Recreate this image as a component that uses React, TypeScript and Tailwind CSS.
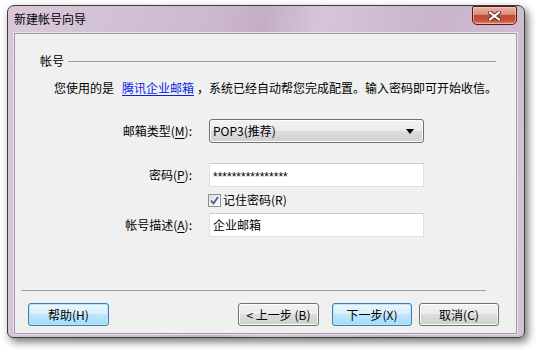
import React from "react";

const font = "font-['Noto_Sans_CJK_SC','Noto_Sans',sans-serif]";

function CloseButton() {
  return (
    <div className="w-[45px] h-[19px] rounded-b-[5px] rounded-t-[2px] border border-[#5a1a10] bg-[linear-gradient(#eab3a6_0%,#d98a78_45%,#c44a35_50%,#c8523a_80%,#e08a70_100%)] shadow-[inset_0_0_0_1px_rgba(255,220,210,0.55)] flex items-center justify-center">
      <svg width="13" height="10" viewBox="0 0 13 10">
        <path d="M2 1.5 L11 8.5 M11 1.5 L2 8.5" stroke="#5b2218" strokeWidth="4" strokeLinecap="square" />
        <path d="M2 1.5 L11 8.5 M11 1.5 L2 8.5" stroke="#ffffff" strokeWidth="2.2" strokeLinecap="square" />
      </svg>
    </div>
  );
}

function WinButton({ label, width, active }: { label: string; width: string; active?: boolean }) {
  const look = active
    ? "border-[#3c7fb1] bg-[linear-gradient(#eaf6fd_0%,#d9f0fc_50%,#bee6fd_50%,#a7d9f5_100%)] shadow-[inset_0_0_0_1px_#b9e4fb]"
    : "border-[#707070] bg-[linear-gradient(#f2f2f2_0%,#ebebeb_50%,#dddddd_50%,#cfcfcf_100%)] shadow-[inset_0_0_0_1px_#fcfcfc]";
  return (
    <div className={`${width} h-[23px] rounded-[3px] border flex items-center justify-center text-[12px] leading-[16px] text-black ${look}`}>
      {label}
    </div>
  );
}

function Label({ text, hot }: { text: string; hot: string }) {
  return (
    <span className="w-[177px] text-right text-[12px] leading-[16px] text-black">
      {text}(<span className="underline underline-offset-2">{hot}</span>):
    </span>
  );
}

export default function App() {
  return (
    <div className={`w-[536px] h-[350px] bg-white pt-[5px] pl-[7px] ${font}`}>
      <div className="w-[518px] h-[333px] flex flex-col rounded-t-[7px] rounded-b-[6px] border border-[#3e3a40] bg-[linear-gradient(100deg,#d9c8da_0%,#cdb9cf_35%,#c4aec7_45%,#d6c5d8_55%,#c9b4cb_75%,#d4c3d6_100%)] shadow-[3px_4px_8px_rgba(0,0,0,0.55)]">
        {/* title bar */}
        <div className="h-[27px] flex items-start justify-between pl-[6px] pr-[7px]">
          <span className="pt-[5px] text-[12px] leading-[16px] text-black">新建帐号向导</span>
          <CloseButton />
        </div>

        {/* client area */}
        <div className="flex-1 ml-[6px] mr-[7px] mb-[3px] flex flex-col border border-[#a697a8] bg-[#f0f0f0] shadow-[0_0_0_1px_#e9e1ea]">
          <div className="mt-[19px] pl-[25px] pr-[20px] flex items-center gap-[4px]">
            <span className="text-[12px] leading-[16px] text-black">帐号</span>
            <div className="flex-1 h-px bg-[#a0a0a0]" />
          </div>

          <div className="mt-[11px] pl-[39px] text-[12px] leading-[16px] text-black whitespace-nowrap">
            您使用的是
            <span className="ml-[8px] mr-[3px] text-[#0a1ee6] underline underline-offset-2">腾讯企业邮箱</span>
            ，系统已经自动帮您完成配置。输入密码即可开始收信。
          </div>

          {/* form */}
          <div className="mt-[23px] flex items-center">
            <Label text="邮箱类型" hot="M" />
            <div className="ml-[17px] w-[215px] h-[24px] rounded-[3px] border border-[#707070] bg-[linear-gradient(#f2f2f2_0%,#ebebeb_50%,#dddddd_50%,#cfcfcf_100%)] shadow-[inset_0_0_0_1px_#fcfcfc] flex items-center justify-between pl-[3px] pr-[9px]">
              <span className="text-[12px] leading-[16px] text-black">POP3(推荐)</span>
              <svg width="8" height="5" viewBox="0 0 8 5">
                <path d="M0 0 H8 L4 5 Z" fill="#000000" />
              </svg>
            </div>
          </div>

          <div className="mt-[20px] flex items-center">
            <Label text="密码" hot="P" />
            <div className="ml-[17px] w-[215px] h-[24px] border border-[#dde1e6] border-t-[#c9ccd2] bg-white flex items-center pl-[3px]">
              <span className="font-['Liberation_Sans',sans-serif] text-[12px] leading-[12px] pt-[3px] text-black">****************</span>
            </div>
          </div>

          <div className="mt-[4px] h-[18px] flex items-center">
            <div className="w-[177px]" />
            <div className="ml-[16px] w-[13px] h-[13px] border border-[#8e8f8f] bg-[linear-gradient(135deg,#dcdcdc,#ffffff)] flex items-center justify-center">
              <svg width="9" height="9" viewBox="0 0 9 9">
                <path d="M1 4.5 L3.5 7.5 L8 1" stroke="#4a5f97" strokeWidth="1.8" fill="none" />
              </svg>
            </div>
            <span className="ml-[2px] text-[12px] leading-[16px] text-black">记住密码(R)</span>
          </div>

          <div className="mt-[4px] flex items-center">
            <Label text="帐号描述" hot="A" />
            <div className="ml-[17px] w-[215px] h-[24px] border border-[#dde1e6] border-t-[#c9ccd2] bg-white flex items-center pl-[3px]">
              <span className="text-[12px] leading-[16px] text-black">企业邮箱</span>
            </div>
          </div>

          <div className="flex-1" />

          <div className="ml-[6px] mr-[30px] h-px bg-[#a0a0a0]" />

          <div className="mt-[12px] mb-[7px] pl-[13px] pr-[17px] flex items-center">
            <WinButton label="帮助(H)" width="w-[81px]" active />
            <div className="flex-1" />
            <WinButton label="< 上一步 (B)" width="w-[81px]" />
            <div className="w-[13px]" />
            <WinButton label="下一步(X)" width="w-[80px]" active />
            <div className="w-[7px]" />
            <WinButton label="取消(C)" width="w-[80px]" />
          </div>
        </div>
      </div>
    </div>
  );
}
